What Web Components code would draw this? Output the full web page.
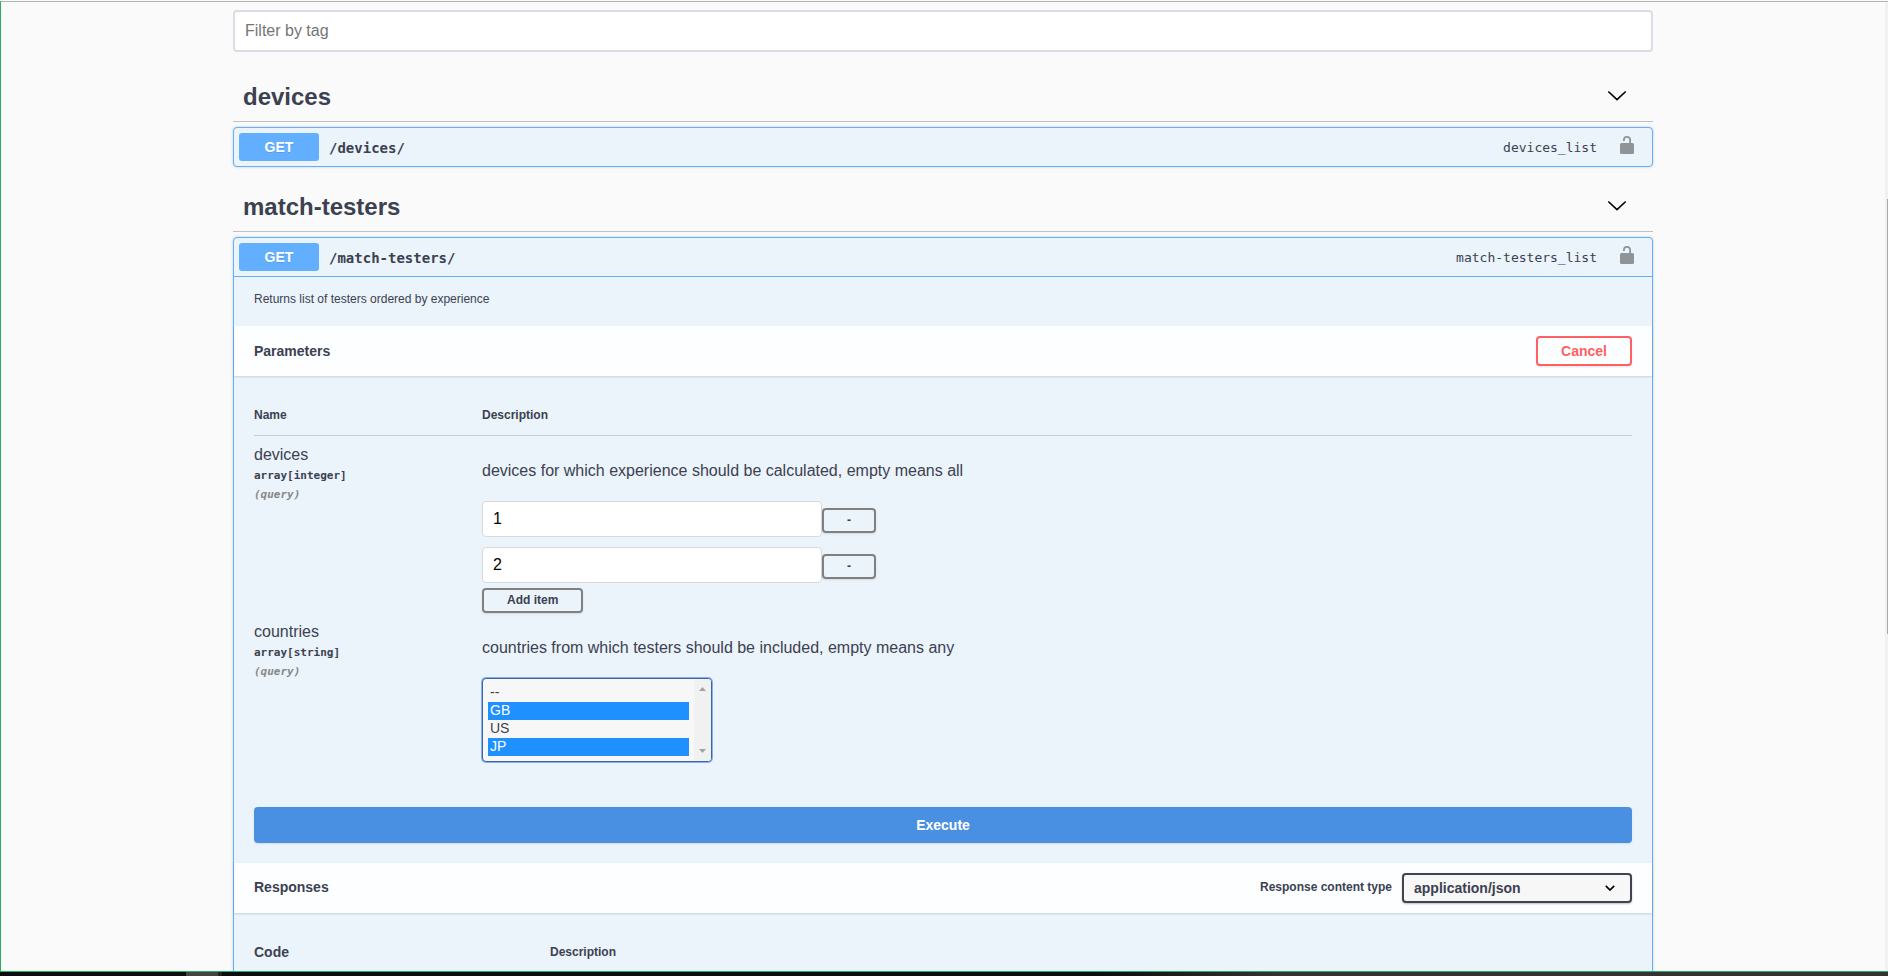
<!DOCTYPE html>
<html lang="en">
<head>
<meta charset="utf-8">
<title>API documentation</title>
<style>
html, body { height: 100%; }
body { margin: 0; font: 14px/1.15 "Liberation Sans", Arial, sans-serif; color: #3b4151; overflow: hidden; }
</style>
</head>
<body>
<api-window>
  <tag-filter></tag-filter>
  <tag-section name="devices">
    <op-block path="/devices/" operation="devices_list"></op-block>
  </tag-section>
  <tag-section name="match-testers">
    <op-block path="/match-testers/" operation="match-testers_list" open>
      <p slot="summary" style="margin:0">Returns list of testers ordered by experience</p>
      <section-bar heading="Parameters"><outline-button kind="cancel">Cancel</outline-button></section-bar>
      <parameters-table></parameters-table>
      <execute-bar></execute-bar>
      <section-bar heading="Responses"><content-type></content-type></section-bar>
      <responses-table></responses-table>
    </op-block>
  </tag-section>
</api-window>
<script>
function define(name, render) {
  customElements.define(name, class extends HTMLElement {
    connectedCallback() {
      if (this.shadowRoot) return;
      const template = document.createElement('template');
      template.innerHTML = '<style>*{box-sizing:border-box}:host{display:block}button,input,select{font-family:inherit;color:inherit;margin:0}</style>' + render(this);
      this.attachShadow({ mode: 'open' }).append(template.content.cloneNode(true));
    }
  });
}

define('api-window', () => `
<style>
:host { display: flex; flex-direction: column; height: 100vh; background: #fafafa; }
.view { flex: 1; min-height: 0; display: flex; overflow: hidden; border-top: 1px solid #b4b4b4; border-left: 1px solid #27ae60; border-bottom: 1px solid #27ae60; margin-top: 1px; }
main { flex: 1; min-width: 0; overflow: hidden; padding-top: 8px; }
.wrap { max-width: 1460px; margin: 0 auto; padding: 0 20px; }
.scroll { width: 3px; background: #f1f1f1; display: flex; flex-direction: column; align-items: flex-end; padding-top: 197px; }
.thumb { width: 1px; height: 435px; background: #a8a8a8; }
.task { height: 4px; background: linear-gradient(90deg, #0b0e0e 0 186px, #444 186px 218px, #222 218px 222px, #0b0e0e 222px 58%, #333 68%); }
</style>
<div class="view"><main><div class="wrap"><slot></slot></div></main><div class="scroll"><div class="thumb"></div></div></div>
<div class="task"></div>`);

define('tag-filter', () => `
<style>
input { display: block; width: 100%; height: 42px; padding: 0 10px; border: 2px solid #d8dde7; border-radius: 4px; background: #fff; font-size: 16px; }
input::placeholder { color: #757575; opacity: 1; }
:host { padding-bottom: 20px; }
</style>
<input type="text" placeholder="Filter by tag" aria-label="Filter by tag">`);

define('tag-section', el => `
<style>
:host { padding-bottom: 15px; }
h3 { display: flex; align-items: center; justify-content: space-between; height: 50px; margin: 0 0 5px; padding: 0 26px 0 10px; border-bottom: 1px solid #bfc0c3; font-size: 24px; }
svg { display: block; width: 20px; height: 20px; }
</style>
<h3><span>${el.getAttribute('name')}</span>
<svg viewBox="0 0 20 20" fill="none" stroke="#000" stroke-width="1.6"><path d="M1.300 4.500 10 12.600 18.700 4.500"/></svg></h3>
<slot></slot>`);

define('op-block', el => `
<style>
:host { border: 1px solid #61affe; border-radius: 4px; background: #ebf3fb; box-shadow: 0 0 3px rgba(0,0,0,.19); }
header { display: flex; align-items: center; height: 38px; padding: 5px; }
:host([open]) header { height: 39px; border-bottom: 1px solid #61affe; }
.method { width: 80px; height: 28px; border-radius: 3px; background: #61affe; color: #fff; font-size: 14px; line-height: 28px; font-weight: 700; text-align: center; text-shadow: 0 1px 0 rgba(0,0,0,.1); }
.path { flex: 1; padding: 2px 10px 0; font: 700 14px "DejaVu Sans Mono", monospace; }
.id { font: 13px "DejaVu Sans Mono", monospace; }
svg { display: block; width: 20px; height: 20px; margin: 0 10px 4px 20px; }
.summary { padding: 16px 20px 0; height: 49px; font-size: 12px; }
</style>
<header><span class="method">GET</span><span class="path">${el.getAttribute('path')}</span><span class="id">${el.getAttribute('operation')}</span>
<svg viewBox="0 0 20 20"><rect x="3" y="8" width="14" height="11" rx="1.500" fill="#8f9498"/><path d="M13.100 8.500V4.800C13.100 2.900 12 1.900 10 1.900S6.900 2.900 6.900 4.800V6" fill="none" stroke="#8f9498" stroke-width="1.800"/></svg></header>
${el.hasAttribute('open') ? '<div class="summary"><slot name="summary"></slot></div><slot></slot>' : ''}`);

define('section-bar', el => `
<style>
:host { display: flex; align-items: center; height: 50px; padding: 0 20px; background: rgba(255,255,255,.85); box-shadow: 0 1px 2px rgba(0,0,0,.15); }
h4 { flex: 1; margin: 0; font-size: 14px; }
</style>
<h4>${el.getAttribute('heading')}</h4><slot></slot>`);

define('outline-button', () => `
<style>
:host { display: inline-block; }
button { display: block; height: 25px; padding: 0 23px; border: 2px solid gray; border-radius: 4px; background: transparent; box-shadow: 0 1px 2px rgba(0,0,0,.1); font-size: 12px; font-weight: 700; line-height: 18px; }
:host([kind=cancel]) button { height: 30px; border-color: #ff6060; color: #ff6060; font-size: 14px; }
</style>
<button type="button"><slot></slot></button>`);

define('parameters-table', () => `
<style>
:host { padding: 20px; }
table { width: 100%; border-collapse: collapse; table-layout: fixed; }
th { height: 39px; padding: 2px 0 0; border-bottom: 1px solid #c4cbd6; font-size: 12px; text-align: left; vertical-align: middle; }
th:first-child { width: 228px; }
td { padding: 10px 0 0; vertical-align: top; }
.name { font-size: 16px; line-height: 18px; }
.type { padding-top: 5px; font: 700 11px/14px "DejaVu Sans Mono", monospace; }
.in { padding-top: 5px; font: italic 700 11px/14px "DejaVu Sans Mono", monospace; color: #888; }
.text { display: block; padding: 16px 0 21px; font-size: 16px; line-height: 18px; }
.item { display: flex; align-items: center; height: 36px; margin-bottom: 10px; }
.item input { width: 340px; height: 36px; padding: 0 10px; border: 1px solid #d9d9d9; border-radius: 4px; background: #fff; color: #000; font-size: 16px; }
.item outline-button { padding-top: 3px; }
.add { display: block; margin-top: -5px; }
.list { display: flex; width: 230px; height: 84px; border: 1px solid #41649c; border-radius: 4px; background: #f7f7f7; box-shadow: 0 0 0 1px #7fb2f7; overflow: hidden; }
select { flex: 1; min-width: 0; height: 82px; padding: 5px; border: 0; outline: 0; background: transparent; font-size: 14px; overflow: hidden; scrollbar-width: none; }
option { height: 18px; min-height: 18px; padding: 0 2px; color: #3b4151; }
option.on { background: #1e90ff linear-gradient(#1e90ff, #1e90ff); color: #fff; }
.bar { width: 17px; background: #f1f1f1; display: flex; flex-direction: column; justify-content: space-between; align-items: center; padding: 8px 0; }
.bar svg { display: block; width: 7px; height: 4px; fill: #a3a3a3; }
</style>
<table>
<thead><tr><th scope="col">Name</th><th scope="col">Description</th></tr></thead>
<tbody>
<tr><td><div class="name">devices</div><div class="type">array[integer]</div><div class="in">(query)</div></td>
<td><span class="text">devices for which experience should be calculated, empty means all</span>
<div class="item"><input type="text" value="1" aria-label="devices item 1"><outline-button>-</outline-button></div>
<div class="item"><input type="text" value="2" aria-label="devices item 2"><outline-button>-</outline-button></div>
<outline-button class="add">Add item</outline-button></td></tr>
<tr><td><div class="name">countries</div><div class="type">array[string]</div><div class="in">(query)</div></td>
<td><label class="text" for="countries">countries from which testers should be included, empty means any</label>
<div class="list"><select id="countries" multiple size="4"><option>--</option><option class="on" selected>GB</option><option>US</option><option class="on" selected>JP</option></select>
<div class="bar"><svg viewBox="0 0 7 4"><path d="M0 4 3.500 0 7 4z"/></svg><svg viewBox="0 0 7 4"><path d="M0 0 3.500 4 7 0z"/></svg></div></div></td></tr>
</tbody></table>`);

define('execute-bar', () => `
<style>
:host { padding: 25px 20px 20px; }
button { display: block; width: 100%; height: 36px; border: 0; border-radius: 4px; background: #4990e2; color: #fff; font-size: 14px; font-weight: 700; box-shadow: 0 1px 2px rgba(0,0,0,.1); }
</style>
<button type="button">Execute</button>`);

define('content-type', () => `
<style>
:host { display: flex; align-items: center; gap: 10px; }
label { font-size: 12px; font-weight: 700; }
select { appearance: none; width: 230px; height: 30px; padding: 0 10px; border: 2px solid #41444e; border-radius: 4px; font-size: 14px; font-weight: 700; box-shadow: 0 1px 2px rgba(0,0,0,.25); background: #f7f7f7; }
.box { display: grid; align-items: center; }
.box > * { grid-area: 1 / 1; }
svg { justify-self: end; width: 10px; height: 6px; margin-right: 17px; pointer-events: none; }
</style>
<label for="type">Response content type</label>
<span class="box"><select id="type"><option>application/json</option></select>
<svg viewBox="0 0 10 6" fill="none" stroke="#000" stroke-width="1.700"><path d="M.8.8 5 5 9.200.8"/></svg></span>`);

define('responses-table', () => `
<style>
:host { padding: 20px; }
table { width: 100%; border-collapse: collapse; table-layout: fixed; }
th { height: 40px; padding: 0; font-size: 14px; text-align: left; }
th:first-child { width: 296px; }
th + th { font-size: 12px; }
</style>
<table><thead><tr><th scope="col">Code</th><th scope="col">Description</th></tr></thead></table>`);
</script>
</body>
</html>
